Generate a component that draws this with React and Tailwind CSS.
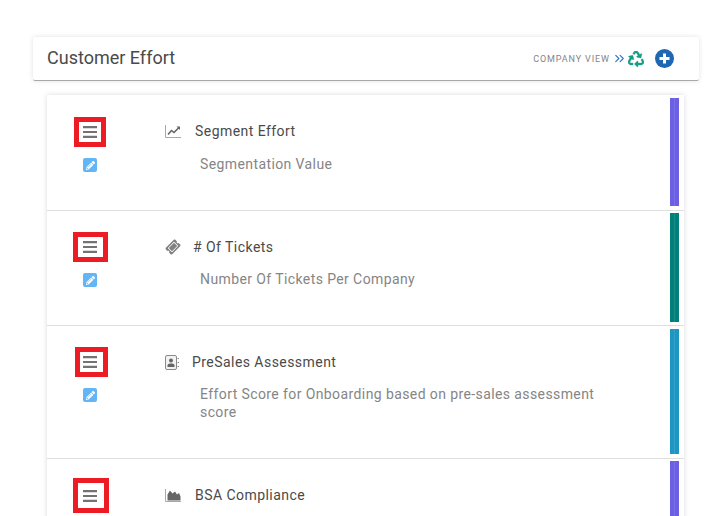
import { FaRecycle, FaPencilAlt, FaTicketAlt } from 'react-icons/fa';
import { ChevronsRight } from 'lucide-react';

function LineIcon() {
  return (
    <svg width="16" height="14" viewBox="0 0 16 14" className="shrink-0">
      <path d="M0.5 1V13.5H16" fill="none" stroke="#a8a8a8" strokeWidth="1" />
      <path d="M3 10.5L6.5 6.5L9 8.5L14 3.5" fill="none" stroke="#666" strokeWidth="1.6" />
      <path d="M11.5 2.5H15V6Z" fill="#666" />
    </svg>
  );
}

function AreaIcon() {
  return (
    <svg width="16" height="14" viewBox="0 0 16 14" className="shrink-0">
      <path d="M0.5 1V13.5H16" fill="none" stroke="#a8a8a8" strokeWidth="1" />
      <path d="M2.5 12.5V6.5L5 2.5L7.5 5.5L10 3.5L12 6.5L14 5L15.5 8.5V12.5Z" fill="#666" />
    </svg>
  );
}

function TicketIcon() {
  return <FaTicketAlt className="w-[16px] text-[12px] text-[#808080] -rotate-45 shrink-0" />;
}

function BookIcon() {
  return (
    <svg width="14" height="15" viewBox="0 0 14 15" className="shrink-0">
      <rect x="0.5" y="0.5" width="11" height="14" rx="1.5" fill="#f2f2f2" stroke="#8a8a8a" strokeWidth="1" />
      <circle cx="6" cy="5.5" r="2" fill="#666" />
      <path d="M2.5 12V10.5C2.5 9 4 8.5 6 8.5C8 8.5 9.5 9 9.5 10.5V12Z" fill="#666" />
      <path d="M12.5 3.5H14M12.5 7.5H14M12.5 11.5H14" stroke="#8a8a8a" strokeWidth="1" />
    </svg>
  );
}

function MenuIcon() {
  return (
    <svg width="14" height="12" viewBox="0 0 14 12" className="shrink-0">
      <path d="M0 1.1H14M0 6H14M0 10.9H14" stroke="#737373" strokeWidth="2.2" />
    </svg>
  );
}

const rows = [
  { title: 'Segment Effort', desc: 'Segmentation Value', Icon: LineIcon, bar: 'bg-[#6b5fe4]', h: 'h-[116px]', box: 'w-[32px] h-[30px] mt-[22px] ml-[27px] pl-[4px]', bh: 'h-[108px]', pt: 'pt-[3px]', tx: 'pt-[27px]', gap: 'gap-[14px]', mt: 'mt-[15px]' },
  { title: '# Of Tickets', desc: 'Number Of Tickets Per Company', Icon: TicketIcon, bar: 'bg-[#007f7b]', h: 'h-[115px]', box: 'w-[35px] h-[30px] mt-[21px] ml-[26px] pl-[5px]', bh: 'h-[109px]', pt: 'pt-[2px]', tx: 'pt-[27px]', gap: 'gap-[12px]', mt: 'mt-[14px]' },
  { title: 'PreSales Assessment', desc: 'Effort Score for Onboarding based on pre-sales assessment score', Icon: BookIcon, bar: 'bg-[#1e96c3]', h: 'h-[133px]', box: 'w-[33px] h-[30px] mt-[21px] ml-[28px] pl-[3px]', bh: 'h-[125px]', pt: 'pt-[3px]', tx: 'pt-[27px]', gap: 'gap-[13px]', mt: 'mt-[14px]' },
  { title: 'BSA Compliance', desc: '', Icon: AreaIcon, bar: 'bg-[#6b5fe4]', h: 'h-[60px]', box: 'w-[36px] h-[35px] mt-[19px] ml-[26px] pl-[5px]', bh: 'h-[60px]', pt: 'pt-[2px]', tx: 'pt-[27px]', gap: 'gap-[14px]', mt: 'mt-[14px]' },
];

function Row({ row, last }) {
  const { Icon } = row;
  return (
    <div className={`flex shrink-0 ${row.h} ${last ? '' : 'border-b border-[#dedede]'}`}>
      <div className="w-[87px] shrink-0 flex flex-col items-start">
        <div className={`${row.box} shrink-0 border-[5px] border-[#ed1c24] flex items-center`}>
          <MenuIcon />
        </div>
        {!last && (
          <div className="mt-[11px] ml-[36px] w-[14px] h-[14px] rounded-[2px] bg-[#64b5f6] flex items-center justify-center">
            <FaPencilAlt className="text-white text-[9px]" />
          </div>
        )}
      </div>
      <div className="w-[31px] shrink-0"></div>
      <div className={`flex-1 ${row.tx}`}>
        <div className={`flex items-center ${row.gap} h-[18px]`}>
          <Icon />
          <span className="text-[14px] tracking-[0.45px] text-[#4a4a4a]">{row.title}</span>
        </div>
        {row.desc && (
          <p className={`${row.mt} pl-[35px] w-[432px] text-[14px] tracking-[0.4px] leading-[18px] text-[#858585]`}>{row.desc}</p>
        )}
      </div>
      <div className={`${row.pt} pr-[5px] shrink-0`}>
        <div className={`w-[9px] ${row.bh} ${row.bar} flex justify-center`}>
          <div className="w-px bg-white/10"></div>
        </div>
      </div>
    </div>
  );
}

export default function App() {
  return (
    <div className="w-[718px] h-[516px] overflow-hidden bg-white pt-[37px] pl-[33px] font-['Roboto',sans-serif]">
      <div className="w-[666px] h-[44px] rounded-[2px] bg-white border-b border-[#a8a8a8] shadow-[0_0_5px_rgba(0,0,0,0.12)] flex items-center pl-[14px] pr-[25px]">
        <h1 className="text-[18px] text-[#4a4a4a] pb-[2px]">Customer Effort</h1>
        <div className="ml-auto flex items-center">
          <span className="text-[9px] tracking-[0.9px] text-[#858585] pt-[2px]">COMPANY VIEW</span>
          <ChevronsRight className="ml-[2px] text-[#2f74c4]" size={15} strokeWidth={1.8} />
          <FaRecycle className="ml-[1px] text-[#169c87] text-[16px]" stroke="currentColor" strokeWidth={12} />
          <svg width="19" height="19" viewBox="0 0 19 19" className="ml-[11px]">
            <circle cx="9.5" cy="9.5" r="9.5" fill="#1f66b3" />
            <path d="M9.5 4.5V14.5M4.5 9.5H14.5" stroke="#fff" strokeWidth="3" />
          </svg>
        </div>
      </div>
      <div className="mt-[14px] ml-[14px] w-[637px] h-[430px] flex flex-col bg-white shadow-[0_0_5px_rgba(0,0,0,0.15)]">
        {rows.map((row, i) => (
          <Row key={row.title} row={row} last={i === rows.length - 1} />
        ))}
      </div>
    </div>
  );
}
